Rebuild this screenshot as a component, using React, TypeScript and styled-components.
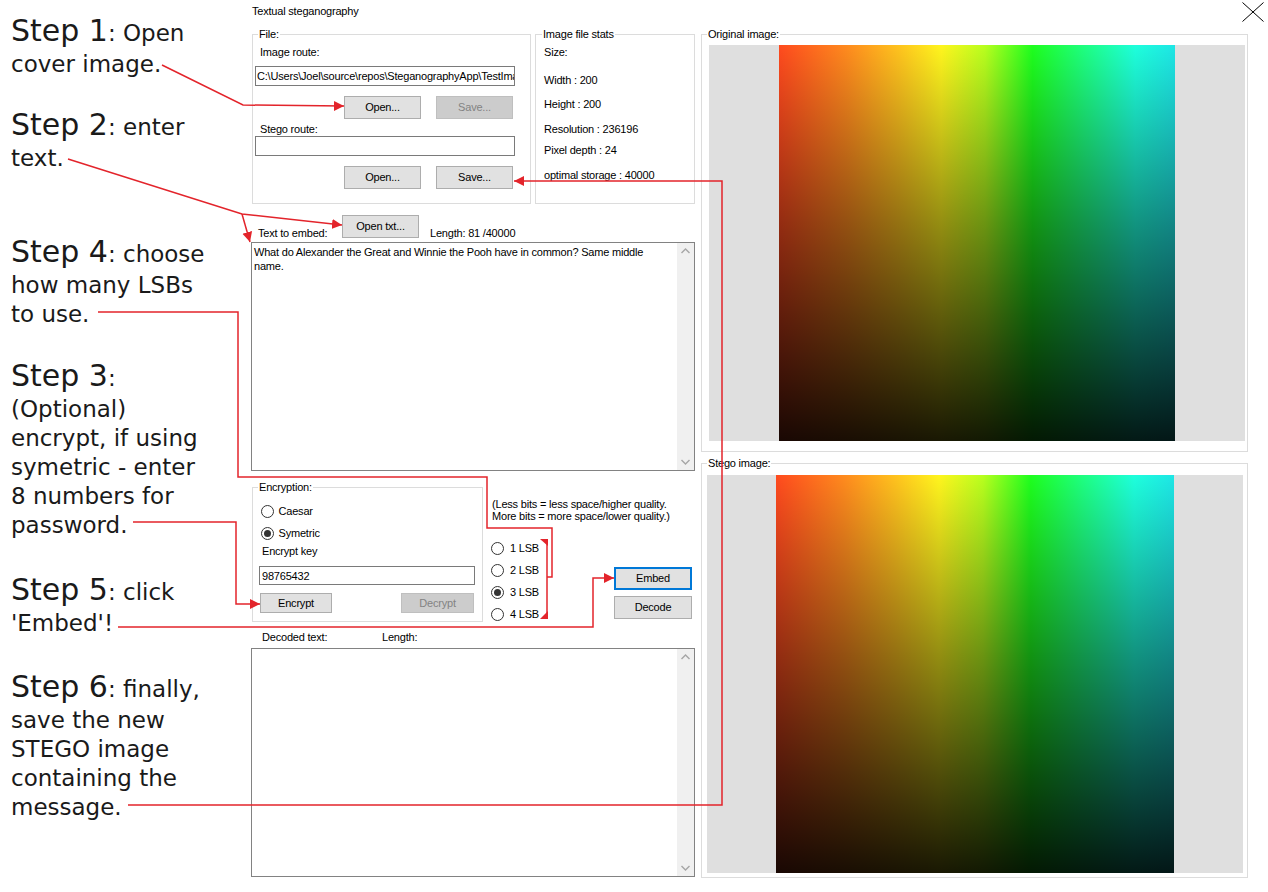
import React from 'react';
import styled, { createGlobalStyle } from 'styled-components';

const GlobalStyle = createGlobalStyle`
  html, body { margin: 0; padding: 0; background: #fff; }
  body { font-family: "Liberation Sans", Arial, sans-serif; }
  #root { width: 1268px; height: 892px; }
`;

const RED = '#e3242b';

const Page = styled.div`
  position: relative;
  width: 1268px;
  height: 892px;
  display: flex;
  overflow: hidden;
  background: #fff;
`;

/* ---------- annotations column ---------- */
const Notes = styled.aside`
  width: 245px;
  flex: none;
  box-sizing: border-box;
  padding-left: 11px;
  display: flex;
  flex-direction: column;
  font-family: "DejaVu Sans", Verdana, sans-serif;
  font-size: 23px;
  line-height: 29px;
  color: #1a1a1a;
`;

const Note = styled.p<{ $gap: number }>`
  margin: ${(p) => p.$gap}px 0 0;
  white-space: nowrap;
`;

const StepTag = styled.span`
  font-size: 30px;
  line-height: 38px;
`;

/* ---------- window ---------- */
const Window = styled.div`
  flex: 1;
  display: flex;
  flex-direction: column;
  padding-left: 6px;
  font-family: "Liberation Sans", Arial, sans-serif;
  font-size: 11px;
  line-height: 13px;
  letter-spacing: -0.2px;
  color: #000;
`;

const TitleBar = styled.header`
  height: 28px;
  display: flex;
  justify-content: space-between;
  align-items: flex-start;
`;

const Title = styled.span`
  margin: 4.5px 0 0 1px;
`;

const CloseGlyph = styled.svg`
  margin: 2px 4px 0 0;
  display: block;
`;

const Body = styled.div`
  display: flex;
  gap: 6px;
`;

const LeftPane = styled.div`
  width: 444px;
  display: flex;
  flex-direction: column;
`;

const RightPane = styled.div`
  width: 547px;
  display: flex;
  flex-direction: column;
`;

const GroupBox = styled.fieldset<{ $w?: number; $h: number; $ml?: number; $mt?: number }>`
  margin: ${(p) => p.$mt ?? 0}px 0 0 ${(p) => p.$ml ?? 0}px;
  padding: 0;
  border: 1px solid #dcdcdc;
  min-width: 0;
  box-sizing: border-box;
  width: ${(p) => (p.$w ? `${p.$w}px` : 'auto')};
  height: ${(p) => p.$h}px;
  flex: none;
`;

const Legend = styled.legend<{ $ml?: number }>`
  margin-left: ${(p) => p.$ml ?? 5}px;
  padding: 0 1px;
  font-size: 11px;
  line-height: 13px;
`;

const Stack = styled.div<{ $pl: number; $pr?: number }>`
  display: flex;
  flex-direction: column;
  padding-left: ${(p) => p.$pl}px;
  padding-right: ${(p) => p.$pr ?? 0}px;
`;

const Label = styled.span<{ $mt?: number; $pl?: number }>`
  display: block;
  margin-top: ${(p) => p.$mt ?? 0}px;
  padding-left: ${(p) => p.$pl ?? 0}px;
  white-space: nowrap;
`;

const TextInput = styled.input<{ $w: number; $h: number; $mt?: number; $pad?: number }>`
  width: ${(p) => p.$w}px;
  height: ${(p) => p.$h}px;
  margin: ${(p) => p.$mt ?? 0}px 0 0;
  box-sizing: border-box;
  border: 1px solid #7a7a7a;
  padding: 0 0 0 ${(p) => p.$pad ?? 1}px;
  font: inherit;
  letter-spacing: inherit;
  color: #000;
  background: #fff;
  outline: none;
`;

const ButtonRow = styled.div<{ $mt: number; $gap?: number; $between?: boolean; $w: number; $px?: number }>`
  display: flex;
  justify-content: ${(p) => (p.$between ? 'space-between' : 'flex-end')};
  gap: ${(p) => p.$gap ?? 0}px;
  width: ${(p) => p.$w}px;
  margin-top: ${(p) => p.$mt}px;
  box-sizing: border-box;
  padding: 0 ${(p) => p.$px ?? 0}px;
`;

const Btn = styled.button<{ $w: number; $h?: number; $focus?: boolean }>`
  width: ${(p) => p.$w}px;
  height: ${(p) => p.$h ?? 23}px;
  flex: none;
  box-sizing: border-box;
  margin: 0;
  padding: 0;
  font: inherit;
  letter-spacing: inherit;
  color: #000;
  background: #e1e1e1;
  border: ${(p) => (p.$focus ? '2px solid #0078d7' : '1px solid #adadad')};
  &:disabled {
    background: #cccccc;
    border-color: #bfbfbf;
    color: #838383;
  }
`;

const TopRow = styled.div`
  display: flex;
  gap: 4px;
  margin-left: 1px;
`;

const HeaderRow = styled.div<{ $mt: number; $h: number; $pl: number }>`
  display: flex;
  align-items: flex-start;
  height: ${(p) => p.$h}px;
  margin-top: ${(p) => p.$mt}px;
  padding-left: ${(p) => p.$pl}px;
`;

const HeaderLabel = styled.span<{ $w?: number; $mt?: number; $ml?: number }>`
  width: ${(p) => (p.$w ? `${p.$w}px` : 'auto')};
  margin-top: ${(p) => p.$mt ?? 0}px;
  margin-left: ${(p) => p.$ml ?? 0}px;
  flex: none;
  white-space: nowrap;
`;

const MemoFrame = styled.div<{ $h: number; $mt: number }>`
  height: ${(p) => p.$h}px;
  margin-top: ${(p) => p.$mt}px;
  border: 1px solid #828282;
  box-sizing: border-box;
  display: flex;
  background: #fff;
`;

const Memo = styled.textarea`
  flex: 1;
  min-width: 0;
  margin: 0;
  border: 0;
  outline: none;
  resize: none;
  overflow: hidden;
  padding: 3px 18px 0 2px;
  font: 11px/13.5px "Liberation Sans", Arial, sans-serif;
  letter-spacing: -0.2px;
  color: #000;
  background: #fff;
`;

const ScrollTrack = styled.div`
  width: 17px;
  flex: none;
  background: #f0f0f0;
  display: flex;
  flex-direction: column;
  justify-content: space-between;
`;

const BottomRow = styled.div`
  display: flex;
  align-items: flex-start;
  height: 141.5px;
  margin-top: 9.5px;
`;

const RadioRow = styled.label<{ $mt?: number; $h?: number; $gap: number }>`
  display: flex;
  align-items: center;
  gap: ${(p) => p.$gap}px;
  height: ${(p) => p.$h ?? 16}px;
  margin-top: ${(p) => p.$mt ?? 0}px;
  white-space: nowrap;
`;

const RadioDot = styled.span<{ $on?: boolean; $ml?: number }>`
  width: 13px;
  height: 13px;
  margin-left: ${(p) => p.$ml ?? 0}px;
  flex: none;
  box-sizing: border-box;
  border: 1px solid #333;
  border-radius: 50%;
  background: #fff;
  display: inline-flex;
  align-items: center;
  justify-content: center;
  &::after {
    content: '';
    width: 7px;
    height: 7px;
    border-radius: 50%;
    background: ${(p) => (p.$on ? '#333' : 'transparent')};
  }
`;

const LsbPanel = styled.div`
  flex: 1;
  display: flex;
  flex-direction: column;
  margin-left: 8px;
  padding-right: 3px;
`;

const Hint = styled.p`
  margin: 17px 0 0;
  padding-left: 1px;
  line-height: 12px;
  white-space: nowrap;
`;

const LsbRow = styled.div`
  display: flex;
  justify-content: space-between;
  align-items: flex-start;
  margin-top: 15.5px;
`;

const RadioList = styled.div`
  display: flex;
  flex-direction: column;
`;

const ActionStack = styled.div`
  display: flex;
  flex-direction: column;
  gap: 6px;
  margin-top: 30px;
`;

const PictureFrame = styled.div<{ $h: number; $mt: number; $w: number }>`
  width: ${(p) => p.$w}px;
  height: ${(p) => p.$h}px;
  margin-top: ${(p) => p.$mt}px;
  background: #dfdfdf;
  display: flex;
  justify-content: center;
`;

const Spectrum = styled.div`
  height: 100%;
  aspect-ratio: 1 / 1;
  background:
    linear-gradient(to bottom, rgba(0, 0, 0, 0) 0%, rgba(0, 0, 0, 0.42) 45%, rgba(0, 0, 0, 0.9) 100%),
    linear-gradient(
      to right,
      #ff4a1e 0%,
      #ff8a1e 17%,
      #ffc21e 30%,
      #fff51e 41%,
      #b8ff1e 52%,
      #1eff1e 64%,
      #1eff80 77%,
      #1effdc 90%,
      #1ee6e6 100%
    );
`;

const Overlay = styled.svg`
  position: absolute;
  left: 0;
  top: 0;
  pointer-events: none;
`;

const Chevron = ({ up }: { up?: boolean }) => (
  <svg width="17" height="17" viewBox="0 0 17 17">
    <polyline
      points={up ? '4.5,10 8.5,6 12.5,10' : '4.5,7 8.5,11 12.5,7'}
      fill="none"
      stroke="#a6a6a6"
      strokeWidth="1.4"
    />
  </svg>
);

const MemoBox = ({ h, mt, value }: { h: number; mt: number; value: string }) => (
  <MemoFrame $h={h} $mt={mt}>
    <Memo defaultValue={value} spellCheck={false} />
    <ScrollTrack>
      <Chevron up />
      <Chevron />
    </ScrollTrack>
  </MemoFrame>
);

const stats: { text: string; mt: number }[] = [
  { text: 'Size:', mt: 4.5 },
  { text: 'Width : 200', mt: 15 },
  { text: 'Height : 200', mt: 11 },
  { text: 'Resolution : 236196', mt: 12 },
  { text: 'Pixel depth : 24', mt: 8 },
  { text: 'optimal storage : 40000', mt: 12 },
];

const lsbOptions = ['1 LSB', '2 LSB', '3 LSB', '4 LSB'];

export default function App() {
  return (
    <>
      <GlobalStyle />
      <Page>
        <Notes>
          <Note $gap={11.6}>
            <StepTag>Step 1</StepTag>: Open
            <br />
            cover image.
          </Note>
          <Note $gap={27}>
            <StepTag>Step 2</StepTag>: enter
            <br />
            text.
          </Note>
          <Note $gap={60}>
            <StepTag>Step 4</StepTag>: choose
            <br />
            how many LSBs
            <br />
            to use.
          </Note>
          <Note $gap={28}>
            <StepTag>Step 3</StepTag>:
            <br />
            (Optional)
            <br />
            encrypt, if using
            <br />
            symetric - enter
            <br />8 numbers for
            <br />
            password.
          </Note>
          <Note $gap={31}>
            <StepTag>Step 5</StepTag>: click
            <br />
            'Embed'!
          </Note>
          <Note $gap={30}>
            <StepTag>Step 6</StepTag>: finally,
            <br />
            save the new
            <br />
            STEGO image
            <br />
            containing the
            <br />
            message.
          </Note>
        </Notes>

        <Window>
          <TitleBar>
            <Title>Textual steganography</Title>
            <CloseGlyph width="22" height="20" viewBox="0 0 22 20">
              <path d="M0.5 0.5 L21.5 19.5 M21.5 0.5 L0.5 19.5" stroke="#000" strokeWidth="1" />
            </CloseGlyph>
          </TitleBar>

          <Body>
            <LeftPane>
              <TopRow>
                <GroupBox $w={279} $h={176}>
                  <Legend>File:</Legend>
                  <Stack $pl={2}>
                    <Label $mt={4.5} $pl={5}>
                      Image route:
                    </Label>
                    <TextInput
                      $w={260}
                      $h={20}
                      $mt={7.5}
                      defaultValue="C:\Users\Joel\source\repos\SteganographyApp\TestImages\spectrum.png"
                    />
                    <ButtonRow $mt={10} $gap={15} $w={260} $px={2}>
                      <Btn $w={77}>Open...</Btn>
                      <Btn $w={77} disabled>
                        Save...
                      </Btn>
                    </ButtonRow>
                    <Label $mt={3.5} $pl={5}>
                      Stego route:
                    </Label>
                    <TextInput $w={260} $h={20} $mt={0.5} defaultValue="" />
                    <ButtonRow $mt={10} $gap={15} $w={260} $px={2}>
                      <Btn $w={77}>Open...</Btn>
                      <Btn $w={77}>Save...</Btn>
                    </ButtonRow>
                  </Stack>
                </GroupBox>

                <GroupBox $w={160} $h={176}>
                  <Legend $ml={6}>Image file stats</Legend>
                  <Stack $pl={8}>
                    {stats.map((s) => (
                      <Label key={s.text} $mt={s.mt}>
                        {s.text}
                      </Label>
                    ))}
                  </Stack>
                </GroupBox>
              </TopRow>

              <HeaderRow $mt={11} $h={24} $pl={7}>
                <HeaderLabel $w={84} $mt={11.5}>
                  Text to embed:
                </HeaderLabel>
                <Btn $w={77}>Open txt...</Btn>
                <HeaderLabel $ml={11} $mt={11.5}>
                  Length: 81 /40000
                </HeaderLabel>
              </HeaderRow>

              <MemoBox
                h={229}
                mt={3}
                value="What do Alexander the Great and Winnie the Pooh have in common? Same middle name."
              />

              <BottomRow>
                <GroupBox $w={231} $h={141.5} $ml={1}>
                  <Legend>Encryption:</Legend>
                  <Stack $pl={6}>
                    <RadioRow $mt={9.5} $gap={5}>
                      <RadioDot $ml={1.5} />
                      Caesar
                    </RadioRow>
                    <RadioRow $mt={6} $gap={5}>
                      <RadioDot $ml={1.5} $on />
                      Symetric
                    </RadioRow>
                    <Label $mt={3.5} $pl={3}>
                      Encrypt key
                    </Label>
                    <TextInput $w={216} $h={19} $mt={8.5} $pad={2} defaultValue="98765432" />
                    <ButtonRow $mt={8} $between $w={216} $px={1}>
                      <Btn $w={72} $h={20}>
                        Encrypt
                      </Btn>
                      <Btn $w={73} $h={20} disabled>
                        Decrypt
                      </Btn>
                    </ButtonRow>
                  </Stack>
                </GroupBox>

                <LsbPanel>
                  <Hint>
                    (Less bits = less space/higher quality.
                    <br />
                    More bits = more space/lower quality.)
                  </Hint>
                  <LsbRow>
                    <RadioList>
                      {lsbOptions.map((o) => (
                        <RadioRow key={o} $h={22} $gap={6}>
                          <RadioDot $on={o === '3 LSB'} />
                          {o}
                        </RadioRow>
                      ))}
                    </RadioList>
                    <ActionStack>
                      <Btn $w={78} $focus>
                        Embed
                      </Btn>
                      <Btn $w={78}>Decode</Btn>
                    </ActionStack>
                  </LsbRow>
                </LsbPanel>
              </BottomRow>

              <HeaderRow $mt={8.5} $h={13} $pl={11}>
                <HeaderLabel $w={120}>Decoded text:</HeaderLabel>
                <HeaderLabel>Length:</HeaderLabel>
              </HeaderRow>

              <MemoBox h={229} mt={4.5} value="" />
            </LeftPane>

            <RightPane>
              <GroupBox $h={424}>
                <Legend>Original image:</Legend>
                <Stack $pl={7}>
                  <PictureFrame $w={536} $h={396} $mt={4}>
                    <Spectrum />
                  </PictureFrame>
                </Stack>
              </GroupBox>
              <GroupBox $h={421} $mt={5}>
                <Legend>Stego image:</Legend>
                <Stack $pl={5}>
                  <PictureFrame $w={536} $h={398} $mt={5}>
                    <Spectrum />
                  </PictureFrame>
                </Stack>
              </GroupBox>
            </RightPane>
          </Body>
        </Window>

        <Overlay width="1268" height="892" viewBox="0 0 1268 892">
          <defs>
            <marker
              id="ah"
              viewBox="0 0 10 10"
              refX="10"
              refY="5"
              markerWidth="10"
              markerHeight="11"
              markerUnits="userSpaceOnUse"
              orient="auto"
            >
              <path d="M0 0 L10 5 L0 10 z" fill={RED} />
            </marker>
          </defs>
          <g fill="none" stroke={RED} strokeWidth="1.5">
            <path d="M162 65 L243 105 L344 106" markerEnd="url(#ah)" />
            <path d="M68 159 L242 214 L342 225" markerEnd="url(#ah)" />
            <path d="M242 214 L250 242" markerEnd="url(#ah)" />
            <path d="M98 312 H238 V477 H487 V528 H552 V577 H547" />
            <path d="M547 540 V618" />
            <path d="M133 522 H236 V604 H260" markerEnd="url(#ah)" />
            <path d="M118 627 H593 V578 H614" markerEnd="url(#ah)" />
            <path d="M128 805 H722 V181 H514" markerEnd="url(#ah)" />
          </g>
          <g fill={RED}>
            <polygon points="540,539 548,539 548,546" />
            <polygon points="548,611 548,619 540,619" />
          </g>
        </Overlay>
      </Page>
    </>
  );
}
